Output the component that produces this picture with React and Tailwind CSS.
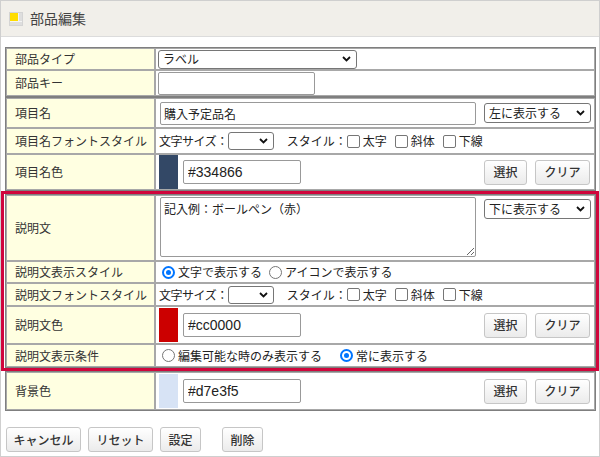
import React from 'react';

const Chevron = () => (
  <svg width="9" height="6" viewBox="0 0 9 6" className="shrink-0">
    <path d="M1 1l3.5 3.5L8 1" fill="none" stroke="#111" strokeWidth="1.8" />
  </svg>
);

const Select = ({ value, className }) => (
  <div className={`flex shrink-0 items-center justify-between border border-[#767676] rounded-[3px] bg-white pl-[4px] pr-[5px] text-[12px] text-[#222] ${className}`}>
    <span className="whitespace-nowrap">{value}</span>
    <Chevron />
  </div>
);

const Checkbox = ({ label }) => (
  <span className="flex shrink-0 items-center mr-[8px]">
    <span className="w-[13px] h-[13px] border border-[#767676] rounded-[2px] bg-white" />
    <span className="ml-[3px] whitespace-nowrap">{label}</span>
  </span>
);

const Radio = ({ label, checked, className }) => (
  <span className={`flex shrink-0 items-center ${className}`}>
    {checked ? (
      <span className="w-[13px] h-[13px] rounded-full border-2 border-[#0075ff] bg-white flex items-center justify-center">
        <span className="w-[5px] h-[5px] rounded-full bg-[#0075ff]" />
      </span>
    ) : (
      <span className="w-[13px] h-[13px] rounded-full border border-[#767676] bg-white" />
    )}
    <span className="ml-[3px] whitespace-nowrap">{label}</span>
  </span>
);

const Button = ({ children, className }) => (
  <button
    type="button"
    className={`h-[25px] shrink-0 border border-[#c6c6c6] rounded-[3px] bg-linear-to-b from-white to-[#ebebeb] text-[12px] font-medium text-[#333] ${className}`}
  >
    {children}
  </button>
);

const Row = ({ label, className, valueClass, children }) => (
  <div className={`flex ${className}`}>
    <div className="w-[149px] shrink-0 flex items-center pl-[8px] border border-[#a8a8a8] bg-[#ffffe1] text-[12px] text-[#333] whitespace-nowrap">
      {label}
    </div>
    <div className={`flex-1 flex border border-[#a8a8a8] bg-white text-[12px] text-[#222] ${valueClass}`}>
      {children}
    </div>
  </div>
);

const HexInput = ({ value }) => (
  <input
    type="text"
    readOnly
    value={value}
    className="ml-[5px] w-[118px] h-[24px] border border-[#999] rounded-[2px] bg-white pl-[4px] text-[14px] text-[#222] font-['Liberation_Sans','Noto_Sans_CJK_JP',sans-serif] outline-none"
  />
);

const ColorRow = ({ label, color, swatchClass, className }) => (
  <Row label={label} className={className} valueClass="items-center pl-[3px] pr-[4px]">
    <span className={`w-[19px] h-[34px] ${swatchClass}`} />
    <HexInput value={color} />
    <Button className="ml-auto w-[43px]">選択</Button>
    <Button className="ml-[8px] w-[55px]">クリア</Button>
  </Row>
);

const FontStyleRow = ({ label, className }) => (
  <Row label={label} className={className} valueClass="items-center pl-[3px]">
    <span className="shrink-0 whitespace-nowrap tracking-[-0.5px]">文字サイズ：</span>
    <Select value="" className="w-[46px] h-[18px]" />
    <span className="ml-[13px] shrink-0 whitespace-nowrap">スタイル：</span>
    <Checkbox label="太字" />
    <Checkbox label="斜体" />
    <Checkbox label="下線" />
  </Row>
);

const Icon = () => (
  <svg width="14" height="14" viewBox="0 0 14 14" className="shrink-0">
    <rect x="0.5" y="0.5" width="13" height="13" fill="#f4f4f4" stroke="#d4d4d4" />
    <rect x="1" y="1" width="8" height="8" fill="#ffdd00" />
    <rect x="10" y="1" width="3" height="8" fill="#dedede" />
    <rect x="1" y="10" width="12" height="3" fill="#dedede" />
  </svg>
);

export default function App() {
  return (
    <div className="w-[600px] h-[457px] border border-[#cfcfcf] bg-white overflow-hidden font-['Noto_Sans_CJK_JP',sans-serif]">
      <div className="h-[36px] flex items-center pl-[8px] bg-[#f1efea] border-b border-[#dcdcdc]">
        <Icon />
        <span className="ml-[7px] text-[14px] text-[#444]">部品編集</span>
      </div>

      {/* 部品 */}
      <div className="mt-[10px] ml-[4px] mr-[3px] border border-[#7f7f7f]">
        <Row label="部品タイプ" className="h-[22px]" valueClass="items-center pl-[2px]">
          <Select value="ラベル" className="w-[199px] h-[19px]" />
        </Row>
        <Row label="部品キー" className="h-[26px]" valueClass="items-center pl-[2px]">
          <input
            type="text"
            readOnly
            className="w-[157px] h-[23px] border border-[#999] rounded-[2px] bg-white outline-none"
          />
        </Row>
      </div>

      {/* 項目名 */}
      <div className="ml-[4px] mr-[3px] border border-[#7f7f7f]">
        <Row label="項目名" className="h-[30px]" valueClass="items-center pl-[4px] pr-[3px]">
          <input
            type="text"
            readOnly
            value="購入予定品名"
            className="w-[316px] h-[23px] border border-[#999] rounded-[2px] bg-white pl-[3px] text-[12px] text-[#222] outline-none"
          />
          <Select value="左に表示する" className="ml-auto w-[107px] h-[20px]" />
        </Row>
        <FontStyleRow label="項目名フォントスタイル" className="h-[26px]" />
        <ColorRow label="項目名色" color="#334866" swatchClass="bg-[#334866]" className="h-[36px]" />
      </div>

      {/* 説明文 */}
      <div className="border-[3px] border-[#d0063c] pl-[1px]">
        <div className="border border-[#7f7f7f]">
          <Row label="説明文" className="h-[66px]" valueClass="items-start pl-[4px] pr-[3px]">
            <textarea
              readOnly
              defaultValue="記入例：ボールペン（赤）"
              className="mt-[1px] w-[316px] h-[60px] border border-[#999] rounded-[2px] bg-white px-[3px] py-[2px] text-[12px] text-[#222] outline-none"
            />
            <Select value="下に表示する" className="ml-auto mt-[3px] w-[107px] h-[20px]" />
          </Row>
          <Row label="説明文表示スタイル" className="h-[22px]" valueClass="items-center pl-[6px]">
            <Radio label="文字で表示する" checked />
            <Radio label="アイコンで表示する" className="ml-[7px]" />
          </Row>
          <FontStyleRow label="説明文フォントスタイル" className="h-[23px]" />
          <ColorRow label="説明文色" color="#cc0000" swatchClass="bg-[#cc0000]" className="h-[38px]" />
          <Row label="説明文表示条件" className="h-[23px]" valueClass="items-center pl-[6px]">
            <Radio label="編集可能な時のみ表示する" />
            <Radio label="常に表示する" checked className="ml-[18px]" />
          </Row>
        </div>
      </div>

      {/* 背景色 */}
      <div className="ml-[4px] mr-[3px] border border-[#7f7f7f]">
        <ColorRow label="背景色" color="#d7e3f5" swatchClass="bg-[#d7e3f5]" className="h-[38px]" />
      </div>

      <div className="mt-[16px] ml-[5px] flex items-center">
        <Button className="w-[75px]">キャンセル</Button>
        <Button className="ml-[7px] w-[65px]">リセット</Button>
        <Button className="ml-[7px] w-[41px]">設定</Button>
        <Button className="ml-[21px] w-[41px]">削除</Button>
      </div>
    </div>
  );
}
